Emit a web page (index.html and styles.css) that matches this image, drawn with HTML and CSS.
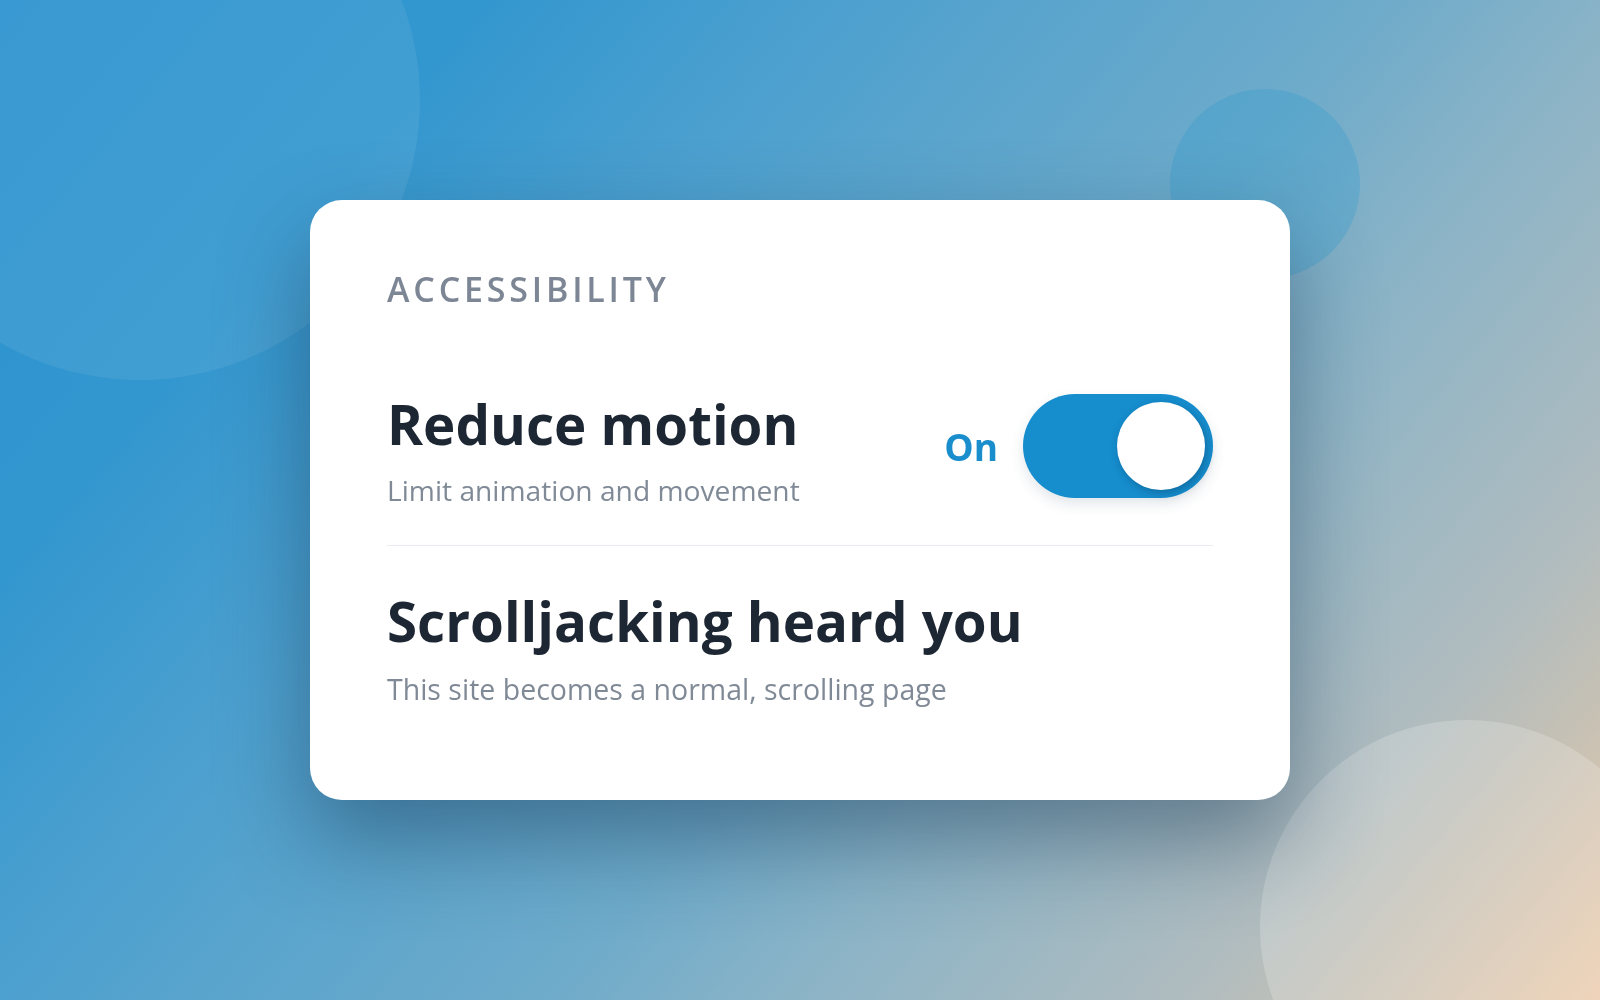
FILE: index.html
```html
<!DOCTYPE html>
<html lang="en">
<head>
<meta charset="utf-8">
<title>Accessibility</title>
<link rel="stylesheet" href="styles.css">
</head>
<body>
  <div class="backdrop" aria-hidden="true">
    <div class="blob blob-tl"></div>
    <div class="blob blob-tr"></div>
    <div class="blob blob-br"></div>
  </div>

  <section class="panel">
    <h2 class="panel-label">Accessibility</h2>

    <div class="setting setting-first">
      <div class="setting-text">
        <h3 class="setting-title">Reduce motion</h3>
        <p class="setting-desc">Limit animation and movement</p>
      </div>
      <div class="switch-group">
        <span class="switch-state">On</span>
        <button class="switch is-on" role="switch" aria-checked="true" aria-label="Reduce motion">
          <span class="switch-knob"></span>
        </button>
      </div>
    </div>

    <div class="setting setting-second">
      <div class="setting-text">
        <h3 class="setting-title">Scrolljacking heard you</h3>
        <p class="setting-desc setting-desc-wide">This site becomes a normal, scrolling page</p>
      </div>
    </div>
  </section>
</body>
</html>
```

FILE: styles.css
```css
html, body {
  margin: 0;
  height: 100%;
}

body {
  position: relative;
  overflow: hidden;
  display: flex;
  align-items: center;
  justify-content: center;
  font-family: "Open Sans", "Noto Sans", "Liberation Sans", sans-serif;
  background: linear-gradient(130deg,
    #2b92cf 0%,
    #3397cf 20%,
    #4ca0cf 34%,
    #6fabca 57%,
    #89b3c7 66%,
    #b0bcbf 83%,
    #c7c1b4 90%,
    #eccaa9 100%);
}

/* soft decorative circles behind the panel, clipped to the viewport */
.backdrop {
  position: fixed;
  inset: 0;
  overflow: hidden;
  pointer-events: none;
}

.blob {
  position: absolute;
  border-radius: 50%;
}

.blob-tl {
  left: -140px;
  top: -180px;
  width: 560px;
  height: 560px;
  background: rgba(255, 255, 255, 0.07);
}

.blob-tr {
  left: 1170px;
  top: 89px;
  width: 190px;
  height: 190px;
  background: rgba(30, 150, 210, 0.24);
}

.blob-br {
  left: 1260px;
  top: 720px;
  width: 414px;
  height: 414px;
  background: rgba(255, 255, 255, 0.2);
}

/* settings panel */
.panel {
  position: relative;
  box-sizing: border-box;
  width: 980px;
  height: 600px;
  padding: 69px 77px 0;
  background: #fff;
  border-radius: 32px;
  box-shadow: 0 40px 90px rgba(16, 44, 70, 0.44);
}

.panel-label {
  margin: 0;
  font-size: 34px;
  line-height: 1.2;
  font-weight: 600;
  letter-spacing: 3.8px;
  text-transform: uppercase;
  color: #7c8694;
}

.setting {
  display: flex;
  align-items: center;
  justify-content: space-between;
}

.setting-first {
  margin-top: 48px;
  padding: 34px 0;
  border-bottom: 1px solid #e8ebef;
}

.setting-second {
  padding-top: 43px;
}

.setting-title {
  margin: 0;
  font-size: 54.7px;
  line-height: 1.2;
  font-weight: 700;
  color: #1d2633;
}

.setting-desc {
  margin: 14px 0 0;
  font-size: 28.2px;
  line-height: 1.4;
  font-weight: 400;
  color: #808a97;
}

.setting-desc-wide {
  margin-top: 15px;
  font-size: 28.5px;
}

.switch-group {
  display: flex;
  align-items: center;
  gap: 25px;
  margin-bottom: 10px;
}

.switch-state {
  font-size: 37px;
  font-weight: 700;
  color: #1a8dcd;
}

.switch {
  position: relative;
  display: flex;
  align-items: center;
  justify-content: flex-end;
  box-sizing: border-box;
  width: 190px;
  height: 104px;
  padding: 8px;
  border: 0;
  border-radius: 52px;
  background: #168dcd;
  box-shadow: 0 6px 14px rgba(20, 60, 90, 0.12);
}

.switch-knob {
  width: 88px;
  height: 88px;
  border-radius: 50%;
  background: #fff;
  box-shadow: 2px 3px 9px rgba(0, 45, 80, 0.35);
}
```
